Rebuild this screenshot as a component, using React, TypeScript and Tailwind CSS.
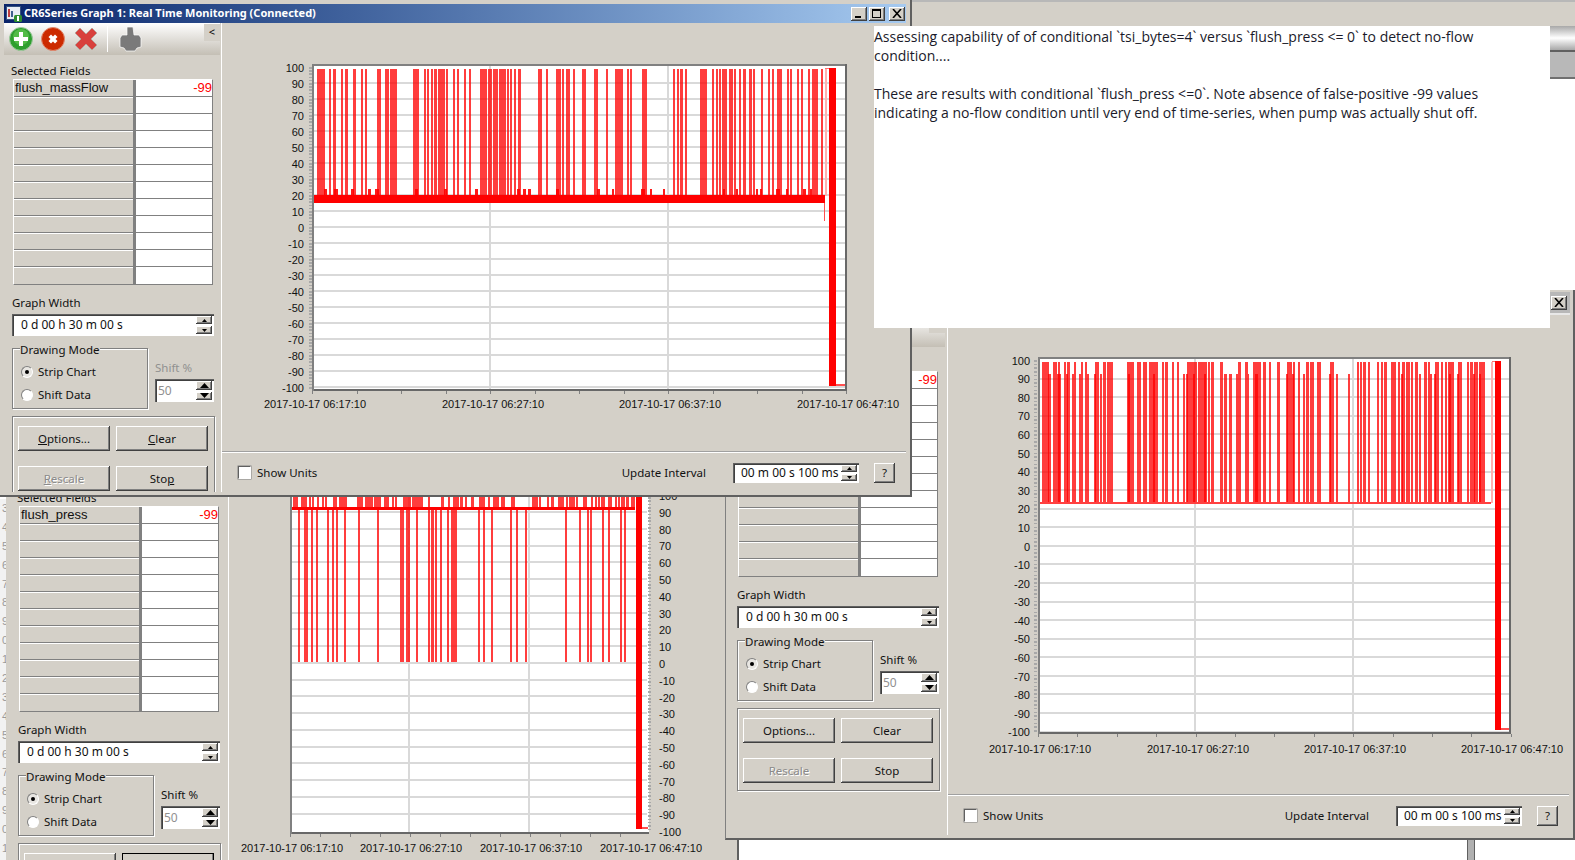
import React from "react";

type Pair = [number, number];
const PANEL = "bg-[#d4d0c8]";
const UI = "font-['Noto_Sans','Liberation_Sans',sans-serif] text-[11.5px] text-[#111]";
const RAISED = "bg-[#d4d0c8] shadow-[inset_-1px_-1px_0_#404040,inset_1px_1px_0_#fff,inset_-2px_-2px_0_#808080]";
const SUNKEN = "bg-white shadow-[inset_1px_1px_0_#606060,inset_2px_2px_0_#404040,inset_-1px_-1px_0_#fff]";

const zoomPairs = (origin: number, list: number[][]): Pair[] =>
  list.map(([a, b]) => [Math.round(origin + a / 3), Math.round(origin + b / 3)] as Pair);

const A_SPIKES: Pair[] = [
  ...zoomPairs(300, [[50, 75], [87, 92], [100, 107], [123, 130], [135, 144], [158, 167], [183, 190], [195, 200], [231, 243], [255, 266], [270, 290], [339, 358], [372, 378], [381, 387], [393, 400], [403, 410], [414, 434], [437, 444], [459, 466], [470, 476], [491, 497], [506, 513], [540, 562], [563, 575], [579, 595], [597, 605], [607, 617], [620, 627], [630, 637], [642, 649], [655, 663], [714, 725], [738, 744], [769, 783], [785, 791], [799, 809], [820, 825], [846, 858], [882, 895]]),
  ...zoomPairs(600, [[18, 25], [45, 70], [82, 87], [90, 96], [126, 141], [220, 226], [232, 238], [240, 250], [254, 260], [300, 321], [336, 342], [348, 354], [358, 363], [366, 381], [388, 399], [402, 409], [417, 424], [430, 438], [448, 455], [460, 466], [483, 489], [504, 510], [516, 522], [532, 545], [561, 567], [570, 576], [590, 597], [603, 610], [624, 630], [636, 653], [662, 668]]),
];
const A_TUFTS: Pair[] = [
  [324, 327], [334, 338], [351, 354], [368, 371], [375, 379], [415, 418], [444, 447], [475, 478], [517, 520], [523, 526], [528, 531], [556, 559], [597, 600],
  ...zoomPairs(600, [[36, 42], [123, 135], [150, 156], [190, 195], [370, 376], [408, 414], [468, 474], [480, 486], [528, 540], [558, 564], [609, 618], [630, 636]]),
];

const B_TALL = zoomPairs(1030, [[33, 54], [66, 78], [81, 87], [99, 105], [108, 117], [129, 135], [150, 156], [162, 168], [192, 204], [216, 225], [228, 246], [288, 309], [318, 330], [336, 348], [354, 381], [393, 399], [402, 411], [423, 429], [438, 444], [468, 498], [501, 528], [531, 537], [540, 549], [567, 576], [621, 630], [642, 651], [666, 690], [696, 705], [714, 720], [738, 747], [768, 783], [786, 792], [801, 807], [825, 834], [837, 849], [858, 870], [897, 909], [978, 984], [987, 993], [996, 1005], [1011, 1017], [1038, 1044], [1050, 1056], [1060, 1068], [1080, 1095], [1101, 1107], [1113, 1122], [1125, 1137], [1140, 1146], [1152, 1161], [1179, 1188], [1191, 1197], [1212, 1224], [1230, 1236], [1242, 1248], [1251, 1269], [1281, 1293], [1308, 1314], [1318, 1326], [1330, 1340], [1344, 1362]]);
const B_SHORT = zoomPairs(1030, [[51, 60], [78, 90], [105, 111], [123, 129], [144, 150], [168, 174], [189, 195], [207, 213], [291, 297], [366, 372], [456, 462], [465, 471], [486, 492], [519, 525], [579, 588], [594, 603], [615, 621], [651, 654], [672, 681], [765, 771], [783, 789], [816, 822], [894, 900], [915, 921], [951, 957], [1110, 1116], [1164, 1170], [1197, 1203], [1209, 1215], [1254, 1260], [1278, 1284], [1326, 1332], [1344, 1350]]);

const C_DOWN = zoomPairs(285, [[36, 42], [54, 66], [75, 81], [90, 96], [123, 129], [138, 144], [150, 156], [174, 180], [216, 222], [273, 279], [342, 354], [360, 372], [390, 396], [426, 432], [435, 444], [447, 453], [462, 468], [483, 490], [495, 513], [576, 582], [591, 597], [615, 621], [672, 678], [690, 696], [717, 723], [837, 843], [879, 885], [903, 909], [912, 918], [948, 954], [966, 972], [1002, 1008], [1014, 1020]]);
const C_UP = zoomPairs(285, [[21, 36], [45, 63], [69, 75], [78, 84], [93, 99], [108, 114], [117, 123], [141, 153], [159, 183], [213, 231], [237, 261], [264, 285], [294, 309], [318, 324], [327, 333], [351, 375], [378, 396], [396, 412], [426, 432], [465, 474], [486, 492], [501, 519], [522, 531], [537, 543], [555, 564], [579, 597], [606, 612], [621, 639], [645, 657], [675, 687], [738, 756], [759, 765], [783, 789], [795, 804], [816, 834], [840, 846], [849, 867], [870, 876], [891, 903], [915, 921], [927, 933], [936, 942], [945, 957], [966, 978], [987, 993], [996, 1002], [1005, 1017], [1020, 1029], [1035, 1047]]);

const range = (from: number, to: number, step: number) => {
  const out: number[] = [];
  for (let v = from; v <= to + 0.001; v += step) out.push(v);
  return out;
};
const VALUES = range(0, 20, 1).map((i) => 100 - i * 10);

function Bars({ list, y0, y1, op = 0.76 }: { list: Pair[]; y0: number; y1: number; op?: number }) {
  return (
    <>
      {list.map(([a, b], i) => (
        <rect key={i} x={a} y={y0} width={b - a} height={y1 - y0} fill="#ff0000" fillOpacity={op} />
      ))}
    </>
  );
}

function PlotFrame(p: {
  vb: string; w: number; h: number;
  x0: number; x1: number; y0: number; y1: number;
  gridY: number[]; gridX: number[];
  ticks: number[]; stripX: number; stripY0: number; stripY1: number; stripStep: number;
  labelX: number; anchor: "start" | "end"; labelY: (v: number) => number;
  dates: number[]; dateY: number; noRight?: boolean;
  children: React.ReactNode;
}) {
  const strips = range(p.stripY0, p.stripY1, p.stripStep);
  return (
    <svg viewBox={p.vb} width={p.w} height={p.h} className="block font-['Liberation_Sans',sans-serif] text-[11px]" shapeRendering="crispEdges">
      <rect x={p.x0} y={p.y0} width={p.x1 - p.x0} height={p.y1 - p.y0} fill="#fff" />
      {p.gridY.map((y) => <rect key={y} x={p.x0 + 2} y={y - 1} width={p.x1 - p.x0 - 4} height={2} fill="#d9d9d9" />)}
      {p.gridX.map((x) => <rect key={x} x={x - 1} y={p.y0 + 2} width={2} height={p.y1 - p.y0 - 4} fill="#d9d9d9" />)}
      {p.children}
      <rect x={p.x0} y={p.y0} width={p.x1 - p.x0} height={2} fill="#808080" />
      <rect x={p.x0} y={p.y1 - 2} width={p.x1 - p.x0} height={2} fill="#686868" />
      <rect x={p.x0} y={p.y0} width={2} height={p.y1 - p.y0} fill="#808080" />
      {!p.noRight && <rect x={p.x1 - 2} y={p.y0} width={2} height={p.y1 - p.y0} fill="#686868" />}
      {strips.map((y) => <rect key={y} x={p.stripX} y={y} width={3} height={1.5} fill="#a8a8a8" />)}
      {p.ticks.map((x) => <rect key={x} x={x} y={p.y1} width={1} height={3} fill="#808080" />)}
      {VALUES.map((v) => (
        <text key={v} x={p.labelX} y={p.labelY(v) + 4} textAnchor={p.anchor} fill="#111" shapeRendering="auto">{v}</text>
      ))}
      {p.dates.map((x, i) => (
        <text key={x} x={x} y={p.dateY + 4} textAnchor="middle" fill="#111">{`2017-10-17 06:${17 + i * 10}:10`}</text>
      ))}
    </svg>
  );
}

function ChartA() {
  return (
    <PlotFrame vb="222 24 684 428" w={684} h={428} x0={312} x1={847} y0={65} y1={392}
      gridY={range(84, 388, 16)} gridX={[490, 668]} ticks={range(312, 848, 44.5)}
      stripX={309} stripY0={68} stripY1={390} stripStep={3.2} labelX={304} anchor="end"
      labelY={(v) => 229 - v * 1.6} dates={[315, 493, 670, 848]} dateY={405}>
      <Bars list={A_SPIKES} y0={70} y1={197} />
      <Bars list={A_TUFTS} y0={190} y1={197} op={0.9} />
      <rect x={313} y={196} width={512} height={8} fill="#ff0000" />
      <rect x={824} y={204} width={1} height={18} fill="#ff5050" />
      <rect x={825} y={70} width={2} height={127} fill="#ffb0b0" />
      <rect x={825} y={69} width={5} height={1} fill="#ff7070" />
      <rect x={829} y={69} width={7} height={318} fill="#ff0000" />
      <rect x={836} y={385} width={9} height={2} fill="#ff5050" />
    </PlotFrame>
  );
}

function ChartB() {
  return (
    <PlotFrame vb="947 313 622 481" w={622} h={481} x0={1037} x1={1510} y0={355} y1={732}
      gridY={range(376.7, 730, 18.57).map(Math.round)} gridX={[1194, 1352]} ticks={range(1037, 1510, 39.4).map(Math.round)}
      stripX={1033} stripY0={358} stripY1={730} stripStep={3.7} labelX={1029} anchor="end"
      labelY={(v) => 544.5 - v * 1.858} dates={[1039, 1197, 1354, 1511]} dateY={747}>
      <Bars list={B_TALL} y0={360} y1={500} />
      <Bars list={B_SHORT} y0={372} y1={500} />
      <rect x={1038} y={500} width={452} height={2} fill="#ff4040" />
      <rect x={1490} y={360} width={2} height={141} fill="#ffb0b0" />
      <rect x={1491} y={359} width={4} height={1} fill="#ff7070" />
      <rect x={1494} y={359} width={6} height={369} fill="#ff0000" />
      <rect x={1500} y={726} width={8} height={2} fill="#ff5050" />
    </PlotFrame>
  );
}

function ChartC() {
  return (
    <PlotFrame vb="228 450 509 410" w={509} h={410} x0={289} x1={648} y0={440} y1={834} noRight
      gridY={range(512, 830, 16.75).map(Math.round)} gridX={[408, 528]} ticks={range(289, 648, 30).map(Math.round)}
      stripX={647} stripY0={497} stripY1={831} stripStep={3.35} labelX={658} anchor="start"
      labelY={(v) => 664 - v * 1.68} dates={[291, 410, 530, 650]} dateY={848}>
      <Bars list={C_DOWN} y0={509} y1={662} />
      <Bars list={C_UP} y0={440} y1={508} />
      <rect x={290} y={507} width={344} height={3} fill="#ff0000" />
      <rect x={635} y={440} width={6} height={389} fill="#ff0000" />
      <rect x={641} y={827} width={6} height={2} fill="#ff5050" />
    </PlotFrame>
  );
}

function Tri({ up, big }: { up?: boolean; big?: boolean }) {
  const w = big ? 9 : 5;
  const h = big ? 5 : 3;
  return (
    <svg width={w} height={h} viewBox={`0 0 ${w} ${h}`} className="block">
      <polygon points={up ? `${w / 2},0 ${w},${h} 0,${h}` : `0,0 ${w},0 ${w / 2},${h}`} fill="#000" />
    </svg>
  );
}

function SpinButtons({ big }: { big?: boolean }) {
  return (
    <div className="flex flex-col w-4 h-full gap-[2px] shrink-0">
      <div className={`${RAISED} flex-1 flex items-center justify-center`}><Tri up big={big} /></div>
      <div className={`${RAISED} flex-1 flex items-center justify-center`}><Tri big={big} /></div>
    </div>
  );
}

function Radio({ checked }: { checked?: boolean }) {
  return (
    <div className={`w-3 h-3 rounded-full border border-t-[#808080] border-l-[#808080] border-r-white border-b-white flex items-center justify-center ${checked ? "bg-[#e8e6e2]" : "bg-white"}`}>
      {checked && <div className="w-1 h-1 rounded-full bg-black" />}
    </div>
  );
}

function PanelButton({ label, mn, disabled, isDefault }: { label: string; mn?: number; disabled?: boolean; isDefault?: boolean }) {
  const chars = mn === undefined ? [label] : [label.slice(0, mn), label[mn], label.slice(mn + 1)];
  return (
    <div className={`${RAISED} h-[25px] flex items-center justify-center ${isDefault ? "outline outline-1 -outline-offset-1 outline-black" : ""} ${disabled ? "text-[#8a8a8a] [text-shadow:1px_1px_0_#fff]" : ""}`}>
      {chars.length === 1 ? label : (<span>{chars[0]}<span className="underline">{chars[1]}</span>{chars[2]}</span>)}
    </div>
  );
}

function Toolbar() {
  return (
    <div className="relative h-8 bg-linear-to-b from-[#ffffff] to-[#c4bfb5] flex items-center pl-[5px] gap-2 shrink-0">
      <svg width="24" height="24" viewBox="0 0 24 24">
        <circle cx="12" cy="12" r="11.5" fill="#2e9e2e" stroke="#9fc99f" />
        <circle cx="12" cy="10" r="8" fill="#52bb46" />
        <path d="M10 5h4v5h5v4h-5v5h-4v-5H5v-4h5z" fill="#fff" />
      </svg>
      <svg width="24" height="24" viewBox="0 0 24 24">
        <circle cx="12" cy="12" r="11.5" fill="#cc2a00" stroke="#e08a70" />
        <path d="M7.5 10 10 7.5l2 2 2-2 2.500 2.500-2 2 2 2-2.500 2.500-2-2-2 2L7.500 14l2-2z" fill="#fff" />
      </svg>
      <svg width="24" height="24" viewBox="0 0 24 24" className="ml-[1px]">
        <path d="M1 6l5-5 6 6 6-6 5 5-6 6 6 6-5 5-6-6-6 6-5-5 6-6z" fill="#d8403c" stroke="#b0a8a0" strokeWidth="0.8" />
      </svg>
      <div className="w-[1px] h-[26px] bg-[#808080] border-r border-white ml-[1px]" />
      <svg width="26" height="26" viewBox="0 0 26 26" className="ml-[1px]">
        <path d="M10 1h6l1 8h5l2 3v9l-4 1-2 3H9l-2-3-4-1v-9l2-3h5z" fill="#7a7a7a" stroke="#fff" strokeWidth="0.7" />
      </svg>
      <div className="absolute right-0 top-[1px] w-4 h-[17px] bg-[#d4d0c8] flex items-center justify-center text-[11px] text-black">&lt;</div>
    </div>
  );
}

function Panel({ field, shiftDisabled, mnemonics, defaultClear }: { field: string; shiftDisabled?: boolean; mnemonics?: boolean; defaultClear?: boolean }) {
  return (
    <div className={`w-[216px] shrink-0 flex flex-col ${PANEL} ${UI}`}>
      <Toolbar />
      <div className="pl-2 w-[212px] flex flex-col">
        <div className="mt-[9px] h-[14px] leading-[14px] -ml-[1px]">Selected Fields</div>
        <div className="mt-[1px] ml-[1px] w-[200px] border-t border-l border-t-white border-l-white border-r border-b border-r-[#808080] border-b-[#808080] flex flex-col">
          {range(0, 11, 1).map((i) => (
            <div key={i} className={`h-[17px] flex ${i < 11 ? "border-b border-[#808080]" : ""}`}>
              <div className={`w-[119px] border-t border-white truncate leading-[15px] text-[13px] font-['Liberation_Sans',sans-serif] pl-[1px] ${i === 0 ? "border-t-0" : ""}`}>{i === 0 ? field : ""}</div>
              <div className="w-[3px] bg-[#808080]" />
              <div className="flex-1 bg-white text-right text-[13px] leading-[15px] text-[#ff0000] font-['Liberation_Sans',sans-serif]">{i === 0 ? "-99" : ""}</div>
            </div>
          ))}
        </div>
        <div className="mt-[11px] h-[14px] leading-[14px]">Graph Width</div>
        <div className={`${SUNKEN} mt-1 h-[22px] w-[202px] flex items-center pl-[9px] pr-[2px] py-[2px]`}>
          <span className="flex-1 text-[12px]">0 d 00 h 30 m 00 s</span>
          <SpinButtons />
        </div>
        <div className="mt-3 flex gap-[7px] w-[202px]">
          <div className="relative w-[136px] h-[61px] border border-[#808080] shadow-[1px_1px_0_#fff,inset_1px_1px_0_#fff] pl-2 pt-[11px] flex flex-col">
            <div className={`absolute left-[7px] -top-[6px] leading-[14px] ${PANEL}`}>Drawing Mode</div>
            <div className="h-[23px] flex items-center gap-[5px]"><Radio checked /><span>Strip Chart</span></div>
            <div className="h-[23px] flex items-center gap-[5px]"><Radio /><span>Shift Data</span></div>
          </div>
          <div className="flex-1 flex flex-col">
            <div className={`mt-[13px] h-[14px] leading-[14px] ${shiftDisabled ? "text-[#909090]" : ""}`}>Shift %</div>
            <div className={`${SUNKEN} mt-1 h-[23px] flex items-center pl-[3px] pr-[2px] py-[2px]`}>
              <span className="flex-1 text-[#909090] text-[12px]">50</span>
              <SpinButtons big />
            </div>
          </div>
        </div>
        <div className="mt-[7px] w-[203px] h-[83px] border border-[#808080] shadow-[inset_1px_1px_0_#fff,1px_1px_0_#fff] pl-[5px] pr-[6px] pt-[9px] grid grid-cols-2 gap-x-[6px] gap-y-[15px] content-start">
          <PanelButton label="Options..." mn={mnemonics ? 0 : undefined} />
          <PanelButton label="Clear" mn={mnemonics ? 0 : undefined} isDefault={defaultClear} />
          <PanelButton label="Rescale" mn={mnemonics ? 0 : undefined} disabled />
          <PanelButton label="Stop" mn={mnemonics ? 3 : undefined} />
        </div>
      </div>
    </div>
  );
}

function BottomBar() {
  return (
    <div className={`h-10 shrink-0 border-t border-t-white shadow-[0_-1px_0_#a0a0a0] flex items-center pl-4 pr-[11px] ${UI}`}>
      <div className="w-[13px] h-[13px] bg-white border border-t-[#606060] border-l-[#606060] border-r-white border-b-white shadow-[0_0_0_0.5px_#808080]" />
      <span className="ml-[6px]">Show Units</span>
      <span className="ml-auto">Update Interval</span>
      <div className={`${SUNKEN} ml-[27px] w-[126px] h-5 flex items-center pl-2 pr-[2px] py-[2px]`}>
        <span className="flex-1 text-[12px] whitespace-nowrap">00 m 00 s 100 ms</span>
        <SpinButtons />
      </div>
      <div className={`${RAISED} ml-[15px] w-[21px] h-5 flex items-center justify-center`}>?</div>
    </div>
  );
}

function CaptionButton({ kind }: { kind: "min" | "max" | "close" }) {
  return (
    <div className={`${RAISED} w-4 h-[14px] flex items-center justify-center`}>
      <svg width="10" height="9" viewBox="0 0 10 9" shapeRendering="crispEdges">
        {kind === "min" && <rect x="1" y="7" width="6" height="2" fill="#000" />}
        {kind === "max" && <path d="M0 0h9v9H0zM1 2v6h7V2z" fill="#000" fillRule="evenodd" />}
        {kind === "close" && <path d="M1 0 L9 9 M9 0 L1 9" stroke="#000" strokeWidth="1.6" shapeRendering="auto" />}
      </svg>
    </div>
  );
}

function AppIcon() {
  return (
    <svg width="16" height="16" viewBox="0 0 16 16" className="shrink-0">
      <rect x="0.500" y="0.500" width="14" height="13" fill="#e8edf5" stroke="#34507e" />
      <rect x="2" y="3" width="2" height="8" fill="#c04040" />
      <rect x="5" y="5" width="2" height="6" fill="#406090" />
      <rect x="8" y="9" width="8" height="7" rx="1.500" fill="#2f8f2f" />
      <rect x="11" y="10" width="2" height="5" fill="#fff" />
    </svg>
  );
}

export default function App() {
  return (
    <div className="relative w-[1575px] h-[860px] overflow-hidden bg-white">
      {/* desktop behind the windows */}
      <div className="absolute left-0 top-0 w-full h-[26px] bg-[#d4d0c8] border-t-2 border-[#b8b8b8]" />
      <div className="absolute right-0 top-[26px] w-[25px] h-[53px] flex flex-col">
        <div className="h-[26px] bg-linear-to-b from-[#a8a8a8] via-[#ffffff] to-[#a8a8a8] border-b-2 border-[#606060]" />
        <div className="flex-1 bg-[#b8b8b8] border-b-2 border-[#707070]" />
      </div>
      <div className="absolute left-[1467px] top-[830px] w-2 h-[30px] bg-[#b0b0b0] border-x border-[#606060]" />

      {/* spreadsheet row numbers peeking out on the far left */}
      <div className="absolute left-0 top-[499px] w-2 bottom-0 bg-[#f2f2f2] border-r border-[#a0a0a0] overflow-hidden flex flex-col items-end font-['Liberation_Sans',sans-serif] text-[11px] text-[#9a9a9a]">
        {[3, 4, 5, 6, 7, 8, 9, 0, 1, 2, 3, 4, 5, 6, 7, 8, 9, 0, 1].map((d, i) => (
          <div key={i} className="h-[18.900px] leading-[18px] -mr-[1px]">{d}</div>
        ))}
      </div>

      {/* window: flush_press */}
      <div className={`absolute left-[6px] top-[427px] w-[733px] h-[500px] pl-[4px] pt-[23px] pr-[2px] flex border-r-2 border-[#606060] ${PANEL}`}>
        <Panel field="flush_press" defaultClear />
        <div className="flex-1 ml-[2px] border-l border-l-white overflow-hidden"><ChartC /></div>
      </div>

      {/* window: flush_massFlow inactive */}
      <div className={`absolute left-[725px] top-[290px] w-[850px] h-[550px] flex flex-col border-l border-[#808080] border-r-2 border-b-2 border-r-[#606060] border-b-[#606060] ${PANEL}`}>
        <div className="h-[23px] mx-[3px] mt-[2px] bg-[#b8b8b8] flex items-center justify-end pr-[3px] shrink-0 border-b-2 border-[#e8e8e8]">
          <CaptionButton kind="close" />
        </div>
        <div className="flex flex-1 pl-[3px] pr-[4px] pb-[3px] min-h-0">
          <Panel field="flush_massFlow" />
          <div className="flex-1 ml-[2px] border-l border-l-white flex flex-col min-w-0">
            <div className="flex-1 overflow-hidden"><ChartB /></div>
            <BottomBar />
          </div>
        </div>
      </div>

      {/* active window */}
      <div className={`absolute left-0 top-0 w-[912px] h-[497px] flex flex-col pl-1 pr-[4px] pt-1 pb-[3px] border-r-2 border-b-2 border-[#606060] ${PANEL}`}>
        <div className="h-[19px] bg-linear-to-r from-[#0a246a] to-[#a6caf0] flex items-center pl-[2px] pr-[1px] gap-[2px] shrink-0">
          <AppIcon />
          <span className="font-['Noto_Sans',sans-serif] text-[11px] font-bold text-white whitespace-nowrap flex-1">CR6Series Graph 1: Real Time Monitoring (Connected)</span>
          <CaptionButton kind="min" />
          <CaptionButton kind="max" />
          <div className="ml-[2px]"><CaptionButton kind="close" /></div>
        </div>
        <div className="flex flex-1 min-h-0 overflow-hidden">
          <Panel field="flush_massFlow" shiftDisabled mnemonics />
          <div className="flex-1 ml-[1px] border-l border-l-white flex flex-col min-w-0">
            <div className="flex-1 overflow-hidden"><ChartA /></div>
            <BottomBar />
          </div>
        </div>
      </div>

      {/* floating note */}
      <div className="absolute left-[874px] top-[26px] w-[676px] h-[302px] bg-white font-['Open_Sans',sans-serif] text-[14px] leading-[19px] text-[#1a1a2a] pt-[1px] whitespace-pre-line">
        {"Assessing capability of of conditional `tsi_bytes=4` versus `flush_press <= 0` to detect no-flow\ncondition....\n\nThese are results with conditional `flush_press <=0`. Note absence of false-positive -99 values\nindicating a no-flow condition until very end of time-series, when pump was actually shut off."}
      </div>
    </div>
  );
}
